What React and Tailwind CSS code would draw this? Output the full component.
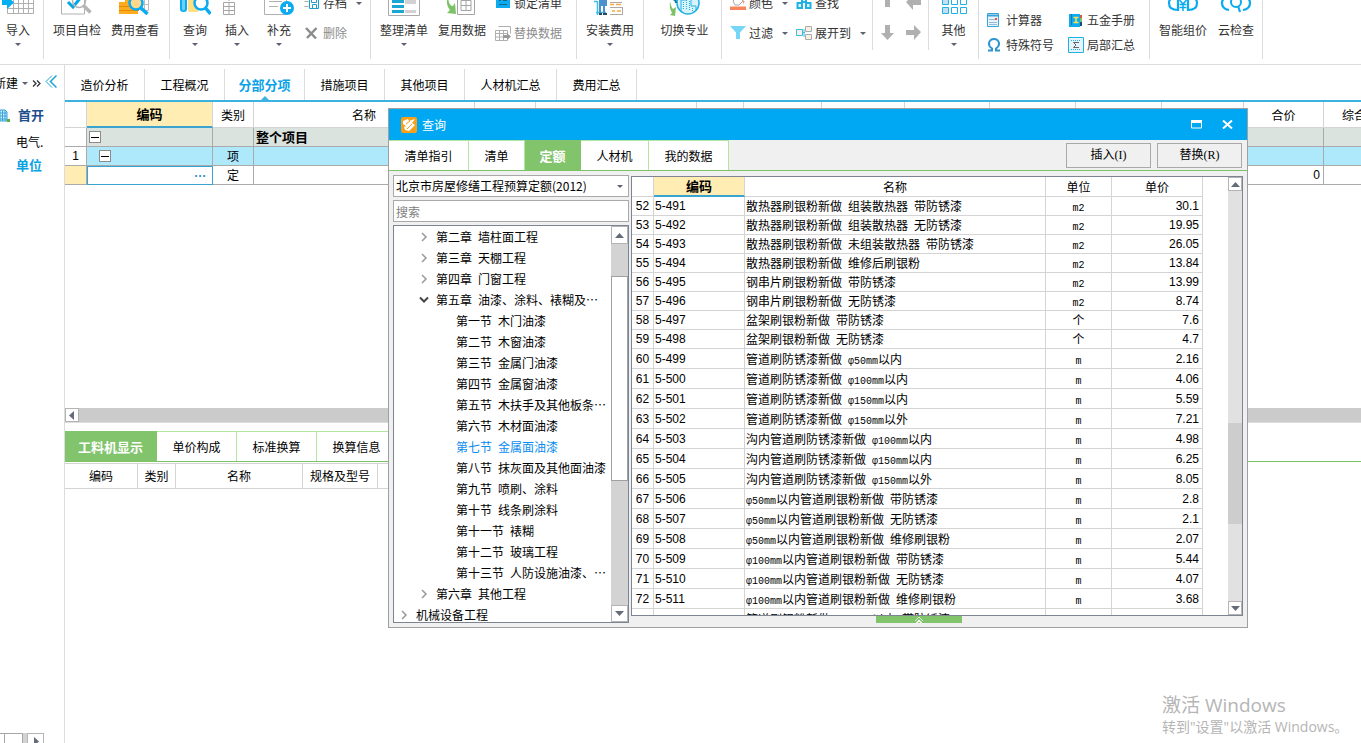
import { useState } from "react";

// ── Data ──────────────────────────────────────────────────────────────────────

const MAIN_TABS = [
  { label: "造价分析", width: "w-20" },
  { label: "工程概况", width: "w-20" },
  { label: "分部分项", width: "w-20" },
  { label: "措施项目", width: "w-20" },
  { label: "其他项目", width: "w-20" },
  { label: "人材机汇总", width: "w-[92px]" },
  { label: "费用汇总", width: "w-20" },
];

const DETAIL_TABS = ["工料机显示", "单价构成", "标准换算", "换算信息"];

const DIALOG_TABS = [
  { label: "清单指引", width: "w-20" },
  { label: "清单", width: "w-14" },
  { label: "定额", width: "w-14" },
  { label: "人材机", width: "w-[68px]" },
  { label: "我的数据", width: "w-20" },
];

const TREE = [
  { level: 1, label: "第二章 墙柱面工程", state: "closed" },
  { level: 1, label: "第三章 天棚工程", state: "closed" },
  { level: 1, label: "第四章 门窗工程", state: "closed" },
  { level: 1, label: "第五章 油漆、涂料、裱糊及…", state: "open" },
  { level: 2, label: "第一节 木门油漆" },
  { level: 2, label: "第二节 木窗油漆" },
  { level: 2, label: "第三节 金属门油漆" },
  { level: 2, label: "第四节 金属窗油漆" },
  { level: 2, label: "第五节 木扶手及其他板条…" },
  { level: 2, label: "第六节 木材面油漆" },
  { level: 2, label: "第七节 金属面油漆" },
  { level: 2, label: "第八节 抹灰面及其他面油漆" },
  { level: 2, label: "第九节 喷刷、涂料" },
  { level: 2, label: "第十节 线条刷涂料" },
  { level: 2, label: "第十一节 裱糊" },
  { level: 2, label: "第十二节 玻璃工程" },
  { level: 2, label: "第十三节 人防设施油漆、…" },
  { level: 1, label: "第六章 其他工程", state: "closed" },
  { level: 0, label: "机械设备工程", state: "closed" },
];

const TREE_INDENT = ["pl-1", "pl-6", "pl-11"];

const QUOTAS = [
  [52, "5-491", "散热器刷银粉新做 组装散热器 带防锈漆", "m2", "30.1"],
  [53, "5-492", "散热器刷银粉新做 组装散热器 无防锈漆", "m2", "19.95"],
  [54, "5-493", "散热器刷银粉新做 未组装散热器 带防锈漆", "m2", "26.05"],
  [55, "5-494", "散热器刷银粉新做 维修后刷银粉", "m2", "13.84"],
  [56, "5-495", "钢串片刷银粉新做 带防锈漆", "m2", "13.99"],
  [57, "5-496", "钢串片刷银粉新做 无防锈漆", "m2", "8.74"],
  [58, "5-497", "盆架刷银粉新做 带防锈漆", "个", "7.6"],
  [59, "5-498", "盆架刷银粉新做 无防锈漆", "个", "4.7"],
  [60, "5-499", "管道刷防锈漆新做 φ50mm以内", "m", "2.16"],
  [61, "5-500", "管道刷防锈漆新做 φ100mm以内", "m", "4.06"],
  [62, "5-501", "管道刷防锈漆新做 φ150mm以内", "m", "5.59"],
  [63, "5-502", "管道刷防锈漆新做 φ150mm以外", "m", "7.21"],
  [64, "5-503", "沟内管道刷防锈漆新做 φ100mm以内", "m", "4.98"],
  [65, "5-504", "沟内管道刷防锈漆新做 φ150mm以内", "m", "6.25"],
  [66, "5-505", "沟内管道刷防锈漆新做 φ150mm以外", "m", "8.05"],
  [67, "5-506", "φ50mm以内管道刷银粉新做 带防锈漆", "m", "2.8"],
  [68, "5-507", "φ50mm以内管道刷银粉新做 无防锈漆", "m", "2.1"],
  [69, "5-508", "φ50mm以内管道刷银粉新做 维修刷银粉", "m", "2.07"],
  [70, "5-509", "φ100mm以内管道刷银粉新做 带防锈漆", "m", "5.44"],
  [71, "5-510", "φ100mm以内管道刷银粉新做 无防锈漆", "m", "4.07"],
  [72, "5-511", "φ100mm以内管道刷银粉新做 维修刷银粉", "m", "3.68"],
  ["", "", "管道刷银粉新做 φ150mm以内 带防锈漆", "", ""],
];

// ── Small pieces ──────────────────────────────────────────────────────────────

// Latin runs are set in a half-width mono face, as in the desktop client
function Mixed({ text }) {
  return text.split(/([\x20-\x7eφ]+)/).map((part, i) =>
    i % 2 ? (
      <span key={i} className="font-['Liberation_Mono',monospace] text-[10px] leading-none">
        {part}
      </span>
    ) : (
      part
    ),
  );
}

function Caret({ className = "" }) {
  return (
    <svg viewBox="0 0 6 3" className={`h-[3px] w-[6px] shrink-0 ${className}`} aria-hidden="true">
      <path d="M0 0h6L3 3z" fill="#5d6270" />
    </svg>
  );
}

function BigButton({ label, width = "w-[58px]", caret, children }) {
  return (
    <button className={`flex shrink-0 flex-col items-center ${width}`}>
      <svg viewBox="0 0 32 32" className="size-8" fill="none" aria-hidden="true">
        {children}
      </svg>
      <span className="mt-1 leading-5 whitespace-nowrap">{label}</span>
      {caret && <Caret className="mt-[3px]" />}
    </button>
  );
}

function SmallButton({ label, caret, disabled, height = "h-[30px]", children }) {
  return (
    <button
      disabled={disabled}
      className={`flex items-center gap-[3px] whitespace-nowrap ${height} ${disabled ? "text-[#8c8c8c]" : ""}`}
    >
      <svg viewBox="0 0 16 16" className="size-4 shrink-0" fill="none" aria-hidden="true">
        {children}
      </svg>
      <span>{label}</span>
      {caret && <Caret className="ml-1.5" />}
    </button>
  );
}

function Group({ width, short, children }) {
  return (
    <div
      className={`flex shrink-0 items-start border-r border-[#dcdcdc] ${width} ${short ? "h-[66px]" : "h-[75px]"}`}
    >
      {children}
    </div>
  );
}

function ArrowBox({ dir, className = "" }) {
  const paths = { up: "M0 5h9L4.5 0z", down: "M0 0h9L4.5 5z", left: "M6 0v9L1 4.5z", right: "M2 0v9l5-4.5z" };
  return (
    <button
      aria-label={dir}
      className={`flex shrink-0 items-center justify-center border border-[#b4b4b4] bg-white ${className}`}
    >
      <svg
        viewBox={dir === "up" || dir === "down" ? "0 0 9 5" : "0 0 8 9"}
        className={dir === "up" || dir === "down" ? "h-[5px] w-[9px]" : "h-[9px] w-2"}
        aria-hidden="true"
      >
        <path d={paths[dir]} fill="#666b78" />
      </svg>
    </button>
  );
}

// ── Ribbon ────────────────────────────────────────────────────────────────────

function Ribbon() {
  return (
    <header className="h-[65px] shrink-0 overflow-hidden border-b border-[#dcdcdc] text-[#333]">
      <div className="-mt-4 flex">
        <Group width="w-11">
          <BigButton label="导入" width="w-9" caret>
            <path d="M5.5 8.5h26v21h-26zM5.5 13.500h26M5.500 19.500h26M5.500 24.500h26M11.500 8v21M16.500 8v21M21.500 8v21M26.500 8v21" stroke="#b0b0b0" />
            <path d="M-1 15h6v-3l7 6.500-7 6.500v-4h-6z" fill="#00b0f0" />
          </BigButton>
        </Group>

        <Group width="w-[126px] pl-1">
          <BigButton label="项目自检">
            <path d="M.5 4.500h23v25.500H.5z" stroke="#b0b0b0" />
            <path d="M7 18l5 5 9-11" stroke="#00a8e8" strokeWidth="3" />
            <circle cx="18" cy="17" r="6.500" stroke="#b5b5b5" strokeWidth="1.500" />
            <path d="M22.500 21.500l7 7" stroke="#b5b5b5" strokeWidth="3.500" />
          </BigButton>
          <BigButton label="费用查看">
            <path d="M0 18h12v12H0zM6 8h13v22H6z" fill="#ffab1f" />
            <path d="M0 22.500h12M0 26.500h20M6 12.500h13" stroke="#e98b00" />
            <path d="M21.500 8.500h8v18h-8M25.500 8v20M21 14.500h9M21 20.500h9" stroke="#bdbdbd" />
            <circle cx="17" cy="19" r="6.500" fill="#ffd78a" stroke="#0cabf0" strokeWidth="2.500" />
            <path d="M21.500 23.500l7 6.500" stroke="#0cabf0" strokeWidth="3.500" />
          </BigButton>
        </Group>

        <Group width="w-[201px] pl-1">
          <BigButton label="查询" width="w-[42px]" caret>
            <path d="M1 4h7v21q0 3-3.500 3T1 25z" fill="#0cabf0" />
            <path d="M3 4h3v21q-1.500 3-3 0z" fill="#69d2fa" />
            <path d="M9 4h10v24H10q-1-1-1-3z" fill="#ffdf80" />
            <circle cx="22" cy="19" r="6.500" fill="#fff" stroke="#0cabf0" strokeWidth="2.500" />
            <path d="M26.500 24l5 6" stroke="#0cabf0" strokeWidth="3.500" />
          </BigButton>
          <BigButton label="插入" width="w-[42px]" caret>
            <path d="M2.500 18.500h11v12h-11zM2.500 22.500h11M2.500 26.500h11M8 18v12.500M8 8v9" stroke="#a6a6a6" />
          </BigButton>
          <BigButton label="补充" width="w-[42px]" caret>
            <path d="M1.500 4.500h22v26h-22z" stroke="#b0b0b0" />
            <path d="M6 12.500h13M6 17.500h13M6 22.500h9" stroke="#b0b0b0" />
            <circle cx="24" cy="24" r="7" fill="#0cabf0" />
            <path d="M20 24h8M24 20v8" stroke="#fff" strokeWidth="2" />
          </BigButton>
          <div className="ml-1 pt-1">
            <SmallButton label="存档" caret>
              <path d="M1 2.500h12M.5 6.500h4M.5 11.500h4" stroke="#aaa" />
              <path d="M5.500 4.500h9v9h-9zM7.500 4v3.500h5V4M8.500 13.500v-4h4v4" stroke="#1c9fc9" />
            </SmallButton>
            <SmallButton label="删除" disabled>
              <path d="M2 3l10 10.500M12.500 3L3 13" stroke="#8c8c8c" strokeWidth="2.500" />
            </SmallButton>
          </div>
        </Group>

        <Group width="w-[206px] pl-1">
          <BigButton label="整理清单" caret>
            <path d="M.5 2.500h31v29H.5z" stroke="#aaa" />
            <path d="M4 8h12v3H4zM4 16h12v3H4zM4 21h12v3H4zM4 26h12v3H4z" fill="#1ba7d4" />
            <path d="M17 8h11v4H17zM17 16h11v4H17zM17 26h11v3H17z" fill="#d4d1d4" />
          </BigButton>
          <BigButton label="复用数据">
            <path d="M11.500 12.500h17v18h-17zM15 16.500h10v10H15zM20 16v10.500M15 21.500h10" stroke="#a5a5a5" />
            <path d="M2 10q0 12 5 12l2-3 1 11-9-1 3-3Q-1 20 2 10z" fill="#7cc267" />
            <path d="M19 8h8v5" stroke="#1ba7d4" strokeWidth="2" />
          </BigButton>
          <div className="ml-1 pt-1">
            <SmallButton label="锁定清单">
              <path d="M1 2h14v11H1z" fill="#0cabf0" />
              <path d="M4 5.500h2M8 5.500h4M4 9.500h8" stroke="#17648b" />
            </SmallButton>
            <SmallButton label="替换数据" disabled>
              <path d="M3.500 1.500h12v7M.5 5.500h12v10H.5zM.5 8.500h12M.5 12h10M4.500 5v10M8.500 5v10" stroke="#b0b0b0" />
              <path d="M8 10h4V8l4 3.500-4 3.500v-2H8z" fill="#999" />
            </SmallButton>
          </div>
        </Group>

        <Group width="w-[67px] justify-center">
          <BigButton label="安装费用" caret>
            <path d="M3.500 17v14M0 17.500h3M2 28.500h10" stroke="#36bfe5" strokeWidth="1.500" />
            <path d="M5 8h8v14h-2v8H9v-8H7v8H5z" fill="#4a92ce" />
            <path d="M5 30h3M9 30h4" stroke="#35465c" strokeWidth="2" />
            <path d="M16 18.500h12M16 23.500h12M16 30.500h12M28.500 23v8" stroke="#aaa" />
            <path d="M16 20.500h4M22 20.500h5M18 27h3M23 27h4" stroke="#f7a944" strokeWidth="1.500" />
          </BigButton>
        </Group>

        <Group width="w-[78px] pl-1 justify-center">
          <BigButton label="切换专业">
            <circle cx="19" cy="19" r="11" fill="#d9f3fd" stroke="#21b2e4" strokeWidth="1.500" />
            <path d="M12 28V16h5v-5h5v11h5v5" stroke="#21b2e4" />
            <path d="M14.500 18v8M17.500 14v12M20.500 13v14M23.500 24v3" stroke="#21b2e4" strokeDasharray="1 1" />
            <path d="M1 17q1 6 3 8l3-2-1 9-5-1 2-2q-3-5-2-12z" fill="#7cc267" />
            <path d="M3 15q4 0 4 4" stroke="#117b9d" strokeWidth="2" />
          </BigButton>
        </Group>

        <Group width="w-[151px] pl-2" short>
          <div className="w-[66px] pt-1">
            <SmallButton label="颜色" caret>
              <path d="M3 6l5-5 5 5-4 4H5z" stroke="#aaa" />
              <path d="M13 5q3 2 0 4z" fill="#f9a16b" />
              <path d="M0 11.500h16V15H0z" fill="#f7865c" />
            </SmallButton>
            <SmallButton label="过滤" caret>
              <path d="M0 1h16L10 7.500V14H6V7.500z" fill="#77d5f7" />
            </SmallButton>
          </div>
          <div className="pt-1">
            <SmallButton label="查找">
              <path d="M3 2h3v5M13 2h-3v5M6 7h4" stroke="#21b2e4" strokeWidth="2" />
              <path d="M1.500 8h4.500v5H1.500zM10 8h4.500v5H10z" fill="#d9f3fd" stroke="#21b2e4" strokeWidth="2" />
            </SmallButton>
            <SmallButton label="展开到" caret>
              <path d="M.5 4.500h6v6h-6z" fill="#f9efe2" stroke="#36bfe5" />
              <path d="M9.500 1.500h6v5h-6zM9.500 9.500h6v5h-6z" fill="#f9efe2" stroke="#aaa" />
              <path d="M7 7.500h2M8 4v8" stroke="#36bfe5" />
            </SmallButton>
          </div>
        </Group>

        <Group width="w-14 justify-center pt-1" short>
          <svg viewBox="0 0 44 60" className="h-[60px] w-11" fill="#b0b0b0" aria-hidden="true">
            <path d="M6 19h5v-9h4l-6.500-7L2 10h4zM27 14l7-7v5h8v5h-8v5z" />
            <path d="M6 37h5v8h4l-6.500 7L2 45h4zM42 44l-7-7v5h-8v5h8v5z" />
          </svg>
        </Group>

        <Group width="w-[50px] justify-center">
          <BigButton label="其他" width="w-[42px]" caret>
            <path d="M4.500 14.500h6v6h-6zM4.500 23.500h6v6h-6z" fill="#c2e0f3" stroke="#21b2e4" />
            <path d="M13.500 14.500h6v6h-6zM22.500 14.500h6v6h-6zM13.500 23.500h6v6h-6zM22.500 23.500h6v6h-6z" stroke="#21b2e4" />
          </BigButton>
        </Group>

        <Group width="w-[171px] pl-2">
          <div className="w-[81px] pt-[23px]">
            <SmallButton label="计算器" height="h-[25px]">
              <path d="M.5 1.500h11v13H.5z" fill="#e6f5fd" stroke="#36a3d9" />
              <path d="M1 3.500h10" stroke="#36a3d9" strokeWidth="2" />
              <path d="M2.500 7.500h7M2.500 10.500h7M2.500 12.500h7" stroke="#4b7fb0" strokeDasharray="1 1" />
              <path d="M8 6h2v2H8z" fill="#e8513c" />
            </SmallButton>
            <SmallButton label="特殊符号" height="h-[25px]">
              <path d="M1 13.500h4v-2Q1.500 9 2 6q1-4 5-4t5 4q.5 3-3 5.500v2h4" stroke="#2f94cf" strokeWidth="2" />
            </SmallButton>
          </div>
          <div className="pt-[23px]">
            <SmallButton label="五金手册" height="h-[25px]">
              <path d="M1 2h11v13H1z" fill="#0cabf0" />
              <path d="M3.500 2v11" stroke="#0a7cb4" />
              <path d="M5.500 5.500h5M8 5.500v5M5.500 10.500h5" stroke="#ffe14d" strokeWidth="1.500" />
              <path d="M12 3h2v3h-2z" fill="#e8513c" />
              <path d="M12 6h2v4h-2z" fill="#7cc267" />
              <path d="M12 10h2v4h-2z" fill="#174d7c" />
            </SmallButton>
            <SmallButton label="局部汇总" height="h-[25px]">
              <path d="M.5.5h15v15H.5z" fill="#e6f5fd" stroke="#21b2e4" />
              <path d="M3 3.500h10M3 12.500h10" stroke="#21b2e4" strokeDasharray="1 1" />
              <path d="M11 5.500H5.500L8 8l-2.500 2.500H11" stroke="#666" />
            </SmallButton>
          </div>
        </Group>

        <Group width="w-[113px] pl-1">
          <BigButton label="智能组价">
            <path d="M9 14q-7-1-7 5 0 7 9 7V14M23 14q7-1 7 5 0 7-9 7V14" stroke="#0cabf0" strokeWidth="2.200" />
            <path d="M12.500 16l3.500 4 3.500-4M12.500 20.500h7M12.500 23.500h7M16 20v7" stroke="#0cabf0" strokeWidth="1.500" />
          </BigButton>
          <BigButton label="云检查" width="w-12">
            <path d="M8 13q-6 1-6 6 0 6 7 7M24 13q6 1 6 6 0 6-7 7" stroke="#0cabf0" strokeWidth="2.200" />
            <circle cx="16" cy="18" r="5" stroke="#0cabf0" strokeWidth="2" />
            <path d="M18 22l2 6" stroke="#0cabf0" strokeWidth="2.200" />
          </BigButton>
        </Group>
      </div>
    </header>
  );
}

// ── Sidebar ───────────────────────────────────────────────────────────────────

function Sidebar() {
  return (
    <aside className="flex w-[65px] shrink-0 flex-col overflow-hidden border-r border-[#dcdcdc]">
      <div className="flex h-9 items-center">
        <button className="-ml-[6px] flex items-center gap-1 whitespace-nowrap">
          新建 <Caret />
        </button>
        <button aria-label="更多" className="ml-1">
          <svg viewBox="0 0 9 7" className="h-[7px] w-[9px]" fill="none" stroke="#333" strokeWidth="1.300" aria-hidden="true">
            <path d="M1 .5l3 3-3 3M5 .5l3 3-3 3" />
          </svg>
        </button>
        <button aria-label="收起" className="mb-1 ml-1">
          <svg viewBox="0 0 12 13" className="h-[13px] w-3" fill="none" stroke="#1ba7d4" aria-hidden="true">
            <path d="M7 .5l-6 6 6 6" />
            <path d="M11.500 .5l-6 6 6 6" strokeWidth="1.500" />
          </svg>
        </button>
      </div>
      <ul className="flex grow flex-col">
        <li className="flex h-7 items-center text-[13px] font-bold text-[#1f4e8c]">
          <svg viewBox="0 0 10 13" className="h-[13px] w-[10px]" fill="none" aria-hidden="true">
            <path d="M0 1h5l2 2v9H0z" fill="#d4effc" stroke="#36a3d9" />
            <path d="M0 4h7M0 7h7M0 10h7M2.500 1v11M5 1v11" stroke="#36a3d9" />
            <path d="M7 10h3v3H7z" fill="#5cae3c" />
          </svg>
          <a href="#root" className="ml-2">首开</a>
        </li>
        <li className="flex h-[26px] items-center pl-4">
          <a href="#dianqi">电气.</a>
        </li>
        <li className="flex h-5 items-center pl-4 text-[13px] font-bold text-[#0aa2e0]">
          <a href="#danwei">单位</a>
        </li>
      </ul>
      <div className="flex h-[10px] items-start overflow-hidden">
        <div className="h-4 w-[5px] border border-l-0 border-[#a6a6a6]" />
        <div className="h-4 w-[18px] border border-l-0 border-[#a6a6a6]" />
        <div className="h-4 w-1 bg-[#d3d3d3]" />
        <ArrowBox dir="right" className="h-[17px] w-[17px]" />
      </div>
    </aside>
  );
}

// ── Project grid ──────────────────────────────────────────────────────────────

function Collapse() {
  return (
    <button aria-label="折叠" className="flex size-3 items-center justify-center border border-[#8c8c8c] bg-white">
      <span className="h-px w-2 bg-black" />
    </button>
  );
}

const GRID_COLS = [
  "w-[22px]", "w-[126px]", "w-[41px]", "w-[221px]", "w-[61px]", "w-[161px]", "w-[47px]",
  "w-[78px]", "w-[83px]", "w-[85px]", "w-[86px]", "w-[86px]", "w-[82px]", "w-[80px]", "w-[85px]",
];
const GRID_HEAD = ["", "编码", "类别", "名称", "", "", "", "", "", "", "", "", "", "合价", "综合合价"];
const GRID_REST = [4, 5, 6, 7, 8, 9, 10, 11, 12];

function ProjectGrid() {
  const cell = "border-r border-b border-[#aaaaaa] p-0";
  return (
    <div className="overflow-hidden">
      <table className="w-[1344px] table-fixed border-separate border-spacing-0">
        <colgroup>
          {GRID_COLS.map((w, i) => (
            <col key={i} className={w} />
          ))}
        </colgroup>
        <thead>
          <tr className="h-[26px]">
            {GRID_HEAD.map((h, i) => (
              <th
                key={i}
                className={`border-r p-0 whitespace-nowrap ${
                  i === 1
                    ? "border-b-2 border-r-[#d4d4d4] border-b-[#3ba3d0] bg-[#ffedb3] text-[13px] font-bold"
                    : "border-b border-[#d4d4d4] font-normal"
                }`}
              >
                {h}
              </th>
            ))}
          </tr>
        </thead>
        <tbody>
          <tr className="h-[19px] bg-[#dae3de]">
            <td className={`${cell} bg-white`} />
            <td className={`${cell} pl-[2px]`}>
              <Collapse />
            </td>
            <td className={cell} />
            <td className={`${cell} pl-[2px] text-[13px] font-bold`}>整个项目</td>
            {GRID_REST.map((i) => (
              <td key={i} className={cell} />
            ))}
            <td className={cell} />
            <td className={cell} />
          </tr>
          <tr className="h-[19px] bg-[#ade8fb]">
            <td className={`${cell} bg-white text-center font-['Liberation_Sans',sans-serif]`}>1</td>
            <td className={`${cell} pl-3`}>
              <Collapse />
            </td>
            <td className={`${cell} text-center`}>项</td>
            <td className={cell} />
            {GRID_REST.map((i) => (
              <td key={i} className={cell} />
            ))}
            <td className={cell} />
            <td className={cell} />
          </tr>
          <tr className="h-[19px]">
            <td className={`${cell} bg-[#ffedb3]`} />
            <td className="border border-[#3ba3d0] p-0 pr-1.5 text-right leading-4 font-bold text-[#2d86c4]">…</td>
            <td className={`${cell} text-center`}>定</td>
            <td className={cell} />
            {GRID_REST.map((i) => (
              <td key={i} className={cell} />
            ))}
            <td className={`${cell} pr-[3px] text-right font-['Liberation_Sans',sans-serif]`}>0</td>
            <td className={cell} />
          </tr>
        </tbody>
      </table>
    </div>
  );
}

// ── Query dialog ──────────────────────────────────────────────────────────────

function ChapterTree() {
  const [selected, setSelected] = useState(10);

  return (
    <div className="flex h-[398px] border border-[#7d8593] bg-white">
      <ul className="min-w-0 grow overflow-hidden">
        {TREE.map((node, i) => (
          <li key={node.label} className={TREE_INDENT[node.level]}>
            <button
              onClick={() => setSelected(i)}
              className={`flex h-[21px] items-center whitespace-nowrap ${selected === i ? "text-[#0a8cf0]" : ""}`}
            >
              <svg viewBox="0 0 12 12" className="mr-1.5 size-3 shrink-0" fill="none" aria-hidden="true">
                {node.state === "closed" && <path d="M4 2l4 4-4 4" stroke="#999" strokeWidth="1.500" />}
                {node.state === "open" && <path d="M2 3.500l4 4 4-4" stroke="#444" strokeWidth="2" />}
              </svg>
              <span className="whitespace-pre">
                <Mixed text={node.label} />
              </span>
            </button>
          </li>
        ))}
      </ul>
      <div className="flex w-[17px] shrink-0 flex-col bg-[#d3d3d3]">
        <ArrowBox dir="up" className="h-[18px]" />
        <div className="mt-8 h-[205px] border border-[#a0a0a0] bg-white" />
        <ArrowBox dir="down" className="mt-auto h-[17px]" />
      </div>
    </div>
  );
}

function QuotaTable() {
  const cell = "border-r border-b border-[#d4d4d4] p-0";
  const latin = "font-['Liberation_Sans',sans-serif]";
  return (
    <div className="flex h-[440px] border border-[#7d8593] bg-white">
      <div className="grow overflow-hidden">
        <table className="w-[571px] table-fixed border-separate border-spacing-0">
          <colgroup>
            <col className="w-[22px]" />
            <col className="w-[91px]" />
            <col className="w-[301px]" />
            <col className="w-[66px]" />
            <col className="w-[91px]" />
          </colgroup>
          <thead>
            <tr className="h-5">
              <th className={cell} />
              <th className="border-r border-b-2 border-r-[#d4d4d4] border-b-[#3ba3d0] bg-[#ffedb3] p-0 text-[13px] font-bold">编码</th>
              <th className={`${cell} font-normal`}>名称</th>
              <th className={`${cell} font-normal`}>单位</th>
              <th className={`${cell} font-normal`}>单价</th>
            </tr>
          </thead>
          <tbody>
            {QUOTAS.map(([no, code, name, unit, price]) => (
              <tr key={name} className={no && no < 60 ? "h-[19px]" : "h-5"}>
                <td className={`${cell} text-center ${latin}`}>{no}</td>
                <td className={`${cell} pl-px ${latin}`}>{code}</td>
                <td className={`${cell} pl-px whitespace-pre`}>
                  <Mixed text={name} />
                </td>
                <td className={`${cell} text-center`}>
                  <Mixed text={unit} />
                </td>
                <td className={`${cell} pr-[3px] text-right ${latin}`}>{price}</td>
              </tr>
            ))}
          </tbody>
        </table>
      </div>
      <div className="flex w-[14px] shrink-0 flex-col bg-[#e1e1e1]">
        <ArrowBox dir="up" className="h-[14px]" />
        <div className="mt-[232px] h-[101px] bg-[#cdcdcd]" />
        <ArrowBox dir="down" className="mt-auto h-[14px]" />
      </div>
    </div>
  );
}

function QueryDialog() {
  const [tab, setTab] = useState("定额");

  return (
    <section
      role="dialog"
      aria-label="查询"
      className="absolute top-[108px] left-[388px] w-[860px] border border-[#a0a0a0] bg-[#f0f0f0]"
    >
      <div className="flex h-[31px] items-center bg-[#00a8f3] pr-3.5 pl-3 text-white">
        <svg viewBox="0 0 16 16" className="mr-[5px] size-4" aria-hidden="true">
          <rect width="16" height="16" rx="2" fill="#f9a01b" />
          <path d="M2 4l5-2 1 2 6-2-3 4 3 2-6 6-4-1-1-3 2-1-3-2z" fill="#fff" />
          <path d="M5 7l4-3M6 12l5-5" stroke="#f9a01b" />
        </svg>
        <h2 className="grow">查询</h2>
        <button aria-label="最大化" className="mr-5">
          <svg viewBox="0 0 11 9" className="h-[9px] w-[11px]" fill="none" stroke="#fff" aria-hidden="true">
            <path d="M.5 1.500h10v6.500H.5z" />
            <path d="M0 1.500h11" strokeWidth="3" />
          </svg>
        </button>
        <button aria-label="关闭">
          <svg viewBox="0 0 11 9" className="h-[9px] w-[11px]" fill="none" stroke="#fff" strokeWidth="2" aria-hidden="true">
            <path d="M1 .5l9 8M10 .5l-9 8" />
          </svg>
        </button>
      </div>

      <div className="flex h-[31px] border-b border-[#7dc265]">
        {DIALOG_TABS.map((t) => (
          <button
            key={t.label}
            onClick={() => setTab(t.label)}
            className={`shrink-0 border-t border-r ${t.width} ${
              tab === t.label
                ? "border-[#82c46c] bg-[#82c46c] text-[13px] font-bold text-white"
                : "border-[#b2e5a0] bg-white"
            }`}
          >
            {t.label}
          </button>
        ))}
        <div className="ml-auto flex items-center gap-1.5 pr-[5px]">
          <button className="h-[25px] w-[85px] border border-[#a9a9a9] bg-[#f0f0f0] font-['Liberation_Serif','Noto_Sans_CJK_SC',serif]">
            插入(I)
          </button>
          <button className="h-[25px] w-[85px] border border-[#a9a9a9] bg-[#f0f0f0] font-['Liberation_Serif','Noto_Sans_CJK_SC',serif]">
            替换(R)
          </button>
        </div>
      </div>

      <div className="flex gap-[2px] p-1">
        <div className="flex w-[236px] shrink-0 flex-col gap-[3px]">
          <div className="relative">
            <select
              aria-label="定额库"
              className="block h-[22px] w-full appearance-none border border-[#a9a9a9] bg-white pl-[2px]"
            >
              <option>北京市房屋修缮工程预算定额(2012)</option>
            </select>
            <Caret className="absolute top-[10px] right-1.5" />
          </div>
          <input
            aria-label="搜索"
            placeholder="搜索"
            className="block h-[22px] w-full border border-[#a9a9a9] bg-white pl-[2px] placeholder:text-[#808080]"
          />
          <ChapterTree />
        </div>
        <div className="min-w-0 grow pt-px">
          <QuotaTable />
          <button aria-label="展开" className="ml-[40%] flex h-[7px] w-[86px] justify-center bg-[#82c46c]">
            <svg viewBox="0 0 10 7" className="h-[7px] w-[10px]" fill="none" stroke="#fff" aria-hidden="true">
              <path d="M1 5l4-4 4 4" stroke="#d5ecce" />
              <path d="M2.500 7L5 4.500 7.500 7" strokeWidth="1.500" />
            </svg>
          </button>
        </div>
      </div>
    </section>
  );
}

// ── Page ──────────────────────────────────────────────────────────────────────

function App() {
  const [mainTab, setMainTab] = useState("分部分项");
  const [detailTab, setDetailTab] = useState("工料机显示");

  return (
    <div className="relative flex h-screen flex-col overflow-hidden bg-white font-['Noto_Sans_CJK_SC',sans-serif] text-[12px] leading-4 text-black">
      <Ribbon />

      <div className="flex min-h-0 grow">
        <Sidebar />

        <main className="flex min-w-0 grow flex-col">
          <nav className="flex h-[37px] shrink-0 items-end border-b-2 border-[#3bb2e0]">
            {MAIN_TABS.map((t) => (
              <button
                key={t.label}
                onClick={() => setMainTab(t.label)}
                className={`relative h-[31px] shrink-0 border-r border-[#dcdcdc] ${t.width} ${
                  mainTab === t.label ? "text-[13px] font-bold text-[#0aa2e8]" : ""
                }`}
              >
                {t.label}
                {mainTab === t.label && (
                  <svg viewBox="0 0 8 4" className="absolute bottom-0 left-9 h-1 w-2" aria-hidden="true">
                    <path d="M4 0l4 4H0z" fill="#3bb2e0" />
                  </svg>
                )}
              </button>
            ))}
          </nav>

          <ProjectGrid />

          <div className="mt-[223px] flex h-[15px] shrink-0 border-b border-[#dcdcdc] bg-[#cbcbcb]">
            <ArrowBox dir="left" className="w-[14px]" />
          </div>

          <div className="mt-2 flex h-[31px] shrink-0 border-b border-[#7dc265]">
            {DETAIL_TABS.map((t) => (
              <button
                key={t}
                onClick={() => setDetailTab(t)}
                className={`shrink-0 border-t border-r ${
                  detailTab === t
                    ? "w-[92px] border-[#82c46c] bg-[#82c46c] text-[13px] font-bold text-white"
                    : "w-20 border-[#b2e5a0]"
                }`}
              >
                {t}
              </button>
            ))}
          </div>

          <table className="mt-px w-[400px] table-fixed border-separate border-spacing-0">
            <thead>
              <tr className="h-[26px]">
                {[
                  ["编码", "w-[73px]"],
                  ["类别", "w-[38px]"],
                  ["名称", "w-[127px]"],
                  ["规格及型号", "w-[75px]"],
                  ["", "w-[87px]"],
                ].map(([label, width]) => (
                  <th key={width} className={`border-t border-r border-b border-[#d4d4d4] p-0 font-normal ${width}`}>
                    {label}
                  </th>
                ))}
              </tr>
            </thead>
          </table>
        </main>
      </div>

      <QueryDialog />

      <div className="absolute right-0 bottom-1.5 w-[199px] font-['Open_Sans','Noto_Sans_CJK_SC',sans-serif] whitespace-nowrap text-[#b5b5b5]">
        <p className="text-[19px] leading-6">激活 Windows</p>
        <p className="text-[14px] leading-5">转到"设置"以激活 Windows。</p>
      </div>
    </div>
  );
}

export default App;
